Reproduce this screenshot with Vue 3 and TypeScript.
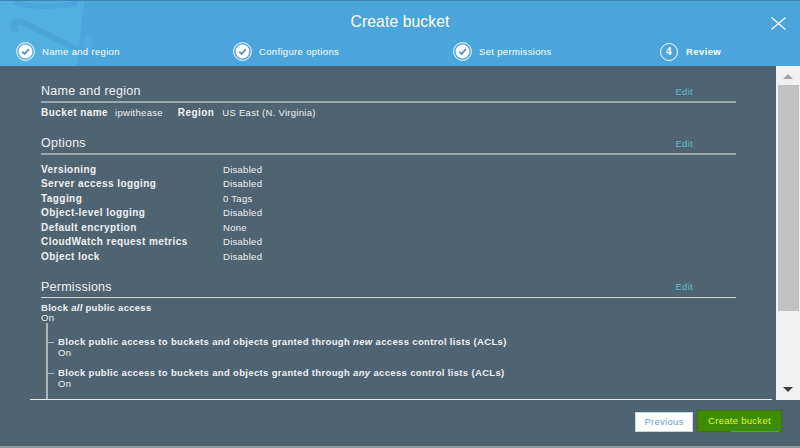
<script setup lang="ts">
interface Step { label: string; done: boolean }
const steps: Step[] = [
  { label: 'Name and region', done: true },
  { label: 'Configure options', done: true },
  { label: 'Set permissions', done: true },
  { label: 'Review', done: false },
]
const options: [string, string][] = [
  ['Versioning', 'Disabled'],
  ['Server access logging', 'Disabled'],
  ['Tagging', '0 Tags'],
  ['Object-level logging', 'Disabled'],
  ['Default encryption', 'None'],
  ['CloudWatch request metrics', 'Disabled'],
  ['Object lock', 'Disabled'],
]
</script>

<template>
  <div class="modal">
    <header class="head">
      <svg class="bucket" width="110" height="66" viewBox="0 0 110 66">
        <path d="M0 0H84L77 66H0Z" fill="#53aee2" />
        <path d="M14 1C30 7 62 7 78 1" fill="none" stroke="#4ba5dc" stroke-width="5" />
        <path d="M15 29C10 24 17 18 24 22L80 50" fill="none" stroke="#4ba5dc" stroke-width="6" stroke-linecap="round" />
        <path d="M88 38V50" fill="none" stroke="#50aae0" stroke-width="8" stroke-linecap="round" />
      </svg>
      <div class="title-row">
        <h1 class="title">Create bucket</h1>
        <svg class="close" width="15" height="13" viewBox="0 0 15 13">
          <path d="M.5 .5L14.5 12.5M14.5 .5L.5 12.5" stroke="#fff" stroke-width="1.1" fill="none" />
        </svg>
      </div>
      <ol class="steps">
        <li v-for="(s, i) in steps" :key="s.label" class="step" :class="{ current: !s.done }">
          <svg v-if="s.done" width="19" height="19" viewBox="0 0 19 19" class="step-icon">
            <circle cx="9.5" cy="9.5" r="8.9" fill="none" stroke="#fff" stroke-width="1" />
            <circle cx="9.5" cy="9.5" r="6.9" fill="#fff" />
            <path d="M6.2 9.7L8.6 12L12.8 7.1" fill="none" stroke="#4a8fbb" stroke-width="1.7" />
          </svg>
          <span v-else class="step-num">{{ i + 1 }}</span>
          <span class="step-label">{{ s.label }}</span>
        </li>
      </ol>
    </header>

    <div class="middle">
      <main class="content">
        <section class="sec sec-name">
          <div class="sec-head"><h2>Name and region</h2><a class="edit">Edit</a></div>
          <p class="name-row">
            <b>Bucket name</b><span class="v1">ipwithease</span><b class="region">Region</b><span class="v1">US East (N. Virginia)</span>
          </p>
        </section>
        <section class="sec sec-options">
          <div class="sec-head"><h2>Options</h2><a class="edit">Edit</a></div>
          <dl class="opts">
            <div v-for="o in options" :key="o[0]" class="opt">
              <dt>{{ o[0] }}</dt><dd>{{ o[1] }}</dd>
            </div>
          </dl>
        </section>
        <section class="sec sec-perm">
          <div class="sec-head"><h2>Permissions</h2><a class="edit">Edit</a></div>
          <div class="perm-all"><b>Block <i>all</i> public access</b><span>On</span></div>
          <div class="tree">
            <div class="leaf">
              <b>Block public access to buckets and objects granted through <i>new</i> access control lists (ACLs)</b>
              <span>On</span>
            </div>
            <div class="leaf">
              <b>Block public access to buckets and objects granted through <i>any</i> access control lists (ACLs)</b>
              <span>On</span>
            </div>
          </div>
        </section>
      </main>
      <div class="scrollbar">
        <span class="arrow up"></span>
        <span class="thumb"></span>
        <span class="arrow down"></span>
      </div>
    </div>

    <footer class="foot">
      <button class="btn prev">Previous</button>
      <button class="btn create">Create bucket</button>
    </footer>
  </div>
</template>

<style>
html, body { margin: 0; background: #8d9aa3; }
</style>

<style scoped>
.modal {
  width: 800px; height: 448px; display: flex; flex-direction: column; overflow: hidden;
  background: #4f6472; color: #eef1f3; font-family: "Liberation Sans", Arial, sans-serif;
  font-size: 9.5px; letter-spacing: .28px; box-sizing: border-box; border-bottom: 2px solid #8d9aa3;
}
.head { position: relative; height: 66px; flex: none; background: #4ba5dc; color: #fff; border-top: 1px solid #3a84b4; box-sizing: border-box; overflow: hidden; }
.bucket { position: absolute; left: 0; top: 0; }
.title-row { position: relative; height: 41px; display: flex; align-items: center; justify-content: center; }
.title { margin: 0; font-size: 15.7px; font-weight: 400; letter-spacing: .1px; }
.close { position: absolute; right: 14px; top: 16px; }
.steps { position: relative; list-style: none; margin: 0; padding: 0 0 0 16px; display: grid; grid-template-columns: 217px 220px 207px auto; }
.step { display: flex; align-items: center; gap: 7px; height: 19px; font-size: 9.5px; letter-spacing: .33px; }
.step-icon { flex: none; }
.step-num { width: 16px; height: 16px; border: 1.5px solid #fff; border-radius: 50%; display: flex; align-items: center; justify-content: center; font-weight: 700; font-size: 10px; margin-right: 1px; }
.current .step-label { font-weight: 700; letter-spacing: .4px; }

.middle { flex: none; height: 334px; display: flex; }
.content { flex: 1; min-width: 0; border-bottom: 1px solid #e8eced; margin: 0 4px 0 30px; padding: 0 36px 0 11px; display: flex; flex-direction: column; box-sizing: border-box; }
.sec-head { display: flex; justify-content: space-between; align-items: center; height: 18px; padding-bottom: 2px; }
.sec-name .sec-head, .sec-options .sec-head { border-bottom: 2px solid #98a6ae; height: 17px; }
.sec-perm .sec-head { border-bottom: 1px solid #cfd5d8; }
h2 { margin: 1px 0 0; font-size: 12.5px; font-weight: 400; letter-spacing: .25px; }
.edit { color: #63b9d3; font-size: 9.5px; margin: 1px 43px 0 0; }
.sec-name { padding-top: 16px; }
.name-row { margin: 4px 0 0; line-height: 12px; }
.name-row b { font-size: 10px; letter-spacing: .44px; }
.v1 { margin: 0 15px 0 7px; }
.region { padding-right: 1px; }
.sec-options { padding-top: 15px; }
.opts { margin: 7px 0 0; }
.opt { display: flex; height: 14.5px; align-items: center; }
dt { width: 182px; font-weight: 700; font-size: 10px; letter-spacing: .44px; }
dd { margin: 0; }
.sec-perm { padding-top: 13.5px; flex: 1; min-height: 0; display: flex; flex-direction: column; }
.perm-all { display: flex; flex-direction: column; padding-top: 5px; line-height: 10px; }
.tree { flex: 1; margin: 0 0 0 5px; border-left: 2px solid #aab5bb; padding: 14px 0 0 10px; letter-spacing: .34px; }
.leaf { position: relative; display: flex; flex-direction: column; line-height: 10.5px; margin-bottom: 10px; }
.leaf::before { content: ""; position: absolute; left: -10px; top: 5px; width: 6px; height: 1px; background: #aab5bb; }

.scrollbar { width: 24px; flex: none; background: #f1f1f1; display: flex; flex-direction: column; align-items: center; }
.arrow { width: 0; height: 0; border-left: 5px solid transparent; border-right: 5px solid transparent; flex: none; }
.up { border-bottom: 5px solid #a3a3a3; margin: 8px 0 6px; }
.thumb { width: 21px; height: 226px; background: #c1c1c1; flex: none; align-self: flex-end; margin-right: 1px; }
.down { border-top: 5px solid #404040; margin-top: auto; margin-bottom: 8px; }

.foot { flex: 1; display: flex; justify-content: flex-end; align-items: flex-start; gap: 6px; padding: 11px 19px 0 0; }
.btn { font-family: inherit; font-size: 9.5px; letter-spacing: .28px; border: 0; padding: 0 0 2px; cursor: pointer; }
.prev { width: 56px; height: 18px; margin-top: 2px; background: #fff; color: #6a9fc9; box-shadow: 0 0 0 1px #c6d6df; }
.create { position: relative; width: 83px; height: 20px; background: #3f8c00; color: #dcf74a; box-shadow: 0 0 1px 1px #3a7412; }
.create::after { content: ""; position: absolute; right: 2px; bottom: -1px; width: 48px; height: 1px; background: #3a9aa8; }
</style>
